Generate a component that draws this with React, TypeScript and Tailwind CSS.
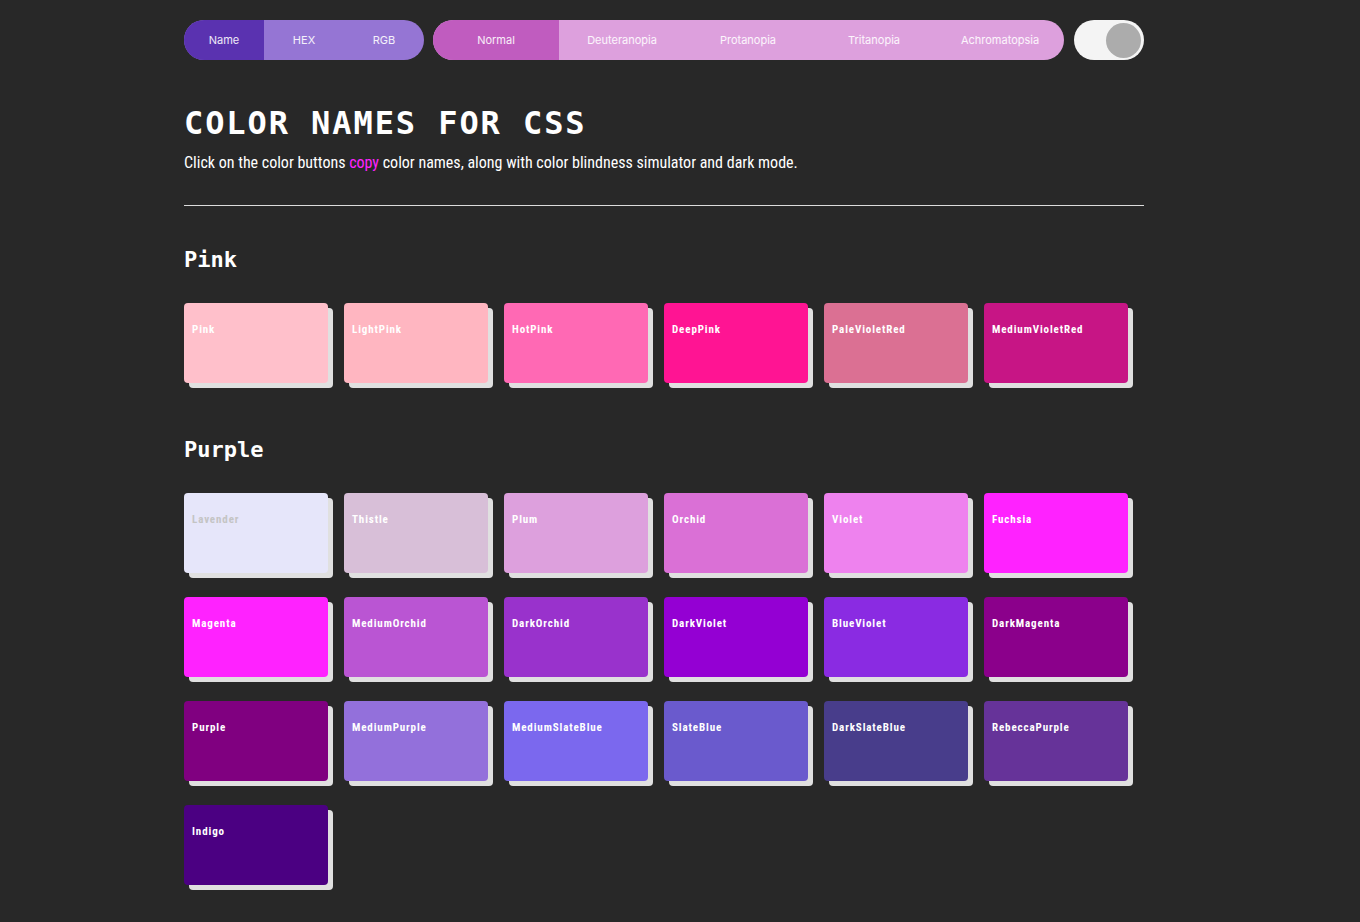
import React from "react";

type Swatch = { name: string; hex: string; dark?: boolean };

const pinks: Swatch[] = [
  { name: "Pink", hex: "#ffc0cb" },
  { name: "LightPink", hex: "#ffb6c1" },
  { name: "HotPink", hex: "#ff69b4" },
  { name: "DeepPink", hex: "#ff1493" },
  { name: "PaleVioletRed", hex: "#db7093" },
  { name: "MediumVioletRed", hex: "#c71585" },
];

const purples: Swatch[] = [
  { name: "Lavender", hex: "#e6e6fa", dark: true },
  { name: "Thistle", hex: "#d8bfd8" },
  { name: "Plum", hex: "#dda0dd" },
  { name: "Orchid", hex: "#da70d6" },
  { name: "Violet", hex: "#ee82ee" },
  { name: "Fuchsia", hex: "#ff22ff" },
  { name: "Magenta", hex: "#ff22ff" },
  { name: "MediumOrchid", hex: "#ba55d3" },
  { name: "DarkOrchid", hex: "#9932cc" },
  { name: "DarkViolet", hex: "#9400d3" },
  { name: "BlueViolet", hex: "#8a2be2" },
  { name: "DarkMagenta", hex: "#8b008b" },
  { name: "Purple", hex: "#800080" },
  { name: "MediumPurple", hex: "#9370db" },
  { name: "MediumSlateBlue", hex: "#7b68ee" },
  { name: "SlateBlue", hex: "#6a5acd" },
  { name: "DarkSlateBlue", hex: "#483d8b" },
  { name: "RebeccaPurple", hex: "#663399" },
  { name: "Indigo", hex: "#4b0082" },
];

const modes = ["Name", "HEX", "RGB"];
const sims = ["Normal", "Deuteranopia", "Protanopia", "Tritanopia", "Achromatopsia"];

function Card({ s }: { s: Swatch }) {
  return (
    <div
      className="h-20 w-[144px] cursor-pointer rounded-[4px] pt-5 pl-2 shadow-[5px_5px_0_#e0e0e0]"
      style={{ backgroundColor: s.hex }}
    >
      <span
        className={
          "block text-[11px] font-bold leading-[13px] tracking-[0.08em] [font-family:'Roboto_Condensed','Liberation_Sans_Narrow',Roboto,sans-serif] " +
          (s.dark ? "text-[#c4c4c4]" : "text-white")
        }
      >
        {s.name}
      </span>
    </div>
  );
}

export default function App() {
  return (
    <main className="min-h-screen bg-[#282828] pr-8 pb-10 text-white [font-family:Inter,'Noto_Sans',sans-serif]">
      <div className="mx-auto w-[960px] pt-5">

        {/* ================= TOP BAR ================= */}
        <div className="flex h-10 items-stretch">
          <div className="flex w-[240px] overflow-hidden rounded-full bg-[#9575d4]">
            {modes.map((m, i) => (
              <div
                key={m}
                className={
                  "flex w-[80px] items-center justify-center text-[11px] text-white/90 " +
                  (i === 0 ? "bg-[#5a32b0]" : "")
                }
              >
                {m}
              </div>
            ))}
          </div>

          <div className="ml-[9px] flex w-[631px] overflow-hidden rounded-full bg-[#dda0dd]">
            {sims.map((m, i) => (
              <div
                key={m}
                className={
                  "flex w-[126px] items-center justify-center text-[11px] text-white/90 " +
                  (i === 0 ? "bg-[#c05cbf]" : "")
                }
              >
                {m}
              </div>
            ))}
          </div>

          <div className="ml-[10px] flex w-[70px] items-center justify-end rounded-full bg-[#f4f4f4] pr-[3px]">
            <div className="h-[35px] w-[35px] rounded-full bg-[#acacac]" />
          </div>
        </div>

        {/* ================= TITLE ================= */}
        <h1 className="mt-[43px] text-[32px] font-bold leading-10 tracking-[0.06em] [font-family:'DejaVu_Sans_Mono','Liberation_Mono',monospace]">
          COLOR NAMES FOR CSS
        </h1>
        <p className="mt-[10px] text-[16px] leading-5 [font-family:'Roboto_Condensed','Liberation_Sans_Narrow',Roboto,sans-serif]">
          Click on the color buttons <span className="text-[#ff22ff]">copy</span> color names, along with color blindness simulator and dark mode.
        </p>

        <hr className="mt-[32px] border-0 border-t border-[#dcdcdc]" />

        {/* ================= PINK ================= */}
        <h2 className="mt-[40px] text-[22px] font-bold leading-7 [font-family:'DejaVu_Sans_Mono','Liberation_Mono',monospace]">
          Pink
        </h2>
        <div className="mt-[29px] grid grid-cols-[repeat(6,144px)] gap-x-4 gap-y-6">
          {pinks.map((s) => (
            <Card key={s.name} s={s} />
          ))}
        </div>

        {/* ================= PURPLE ================= */}
        <h2 className="mt-[53px] text-[22px] font-bold leading-7 [font-family:'DejaVu_Sans_Mono','Liberation_Mono',monospace]">
          Purple
        </h2>
        <div className="mt-[29px] grid grid-cols-[repeat(6,144px)] gap-x-4 gap-y-6">
          {purples.map((s) => (
            <Card key={s.name} s={s} />
          ))}
        </div>

      </div>
    </main>
  );
}
